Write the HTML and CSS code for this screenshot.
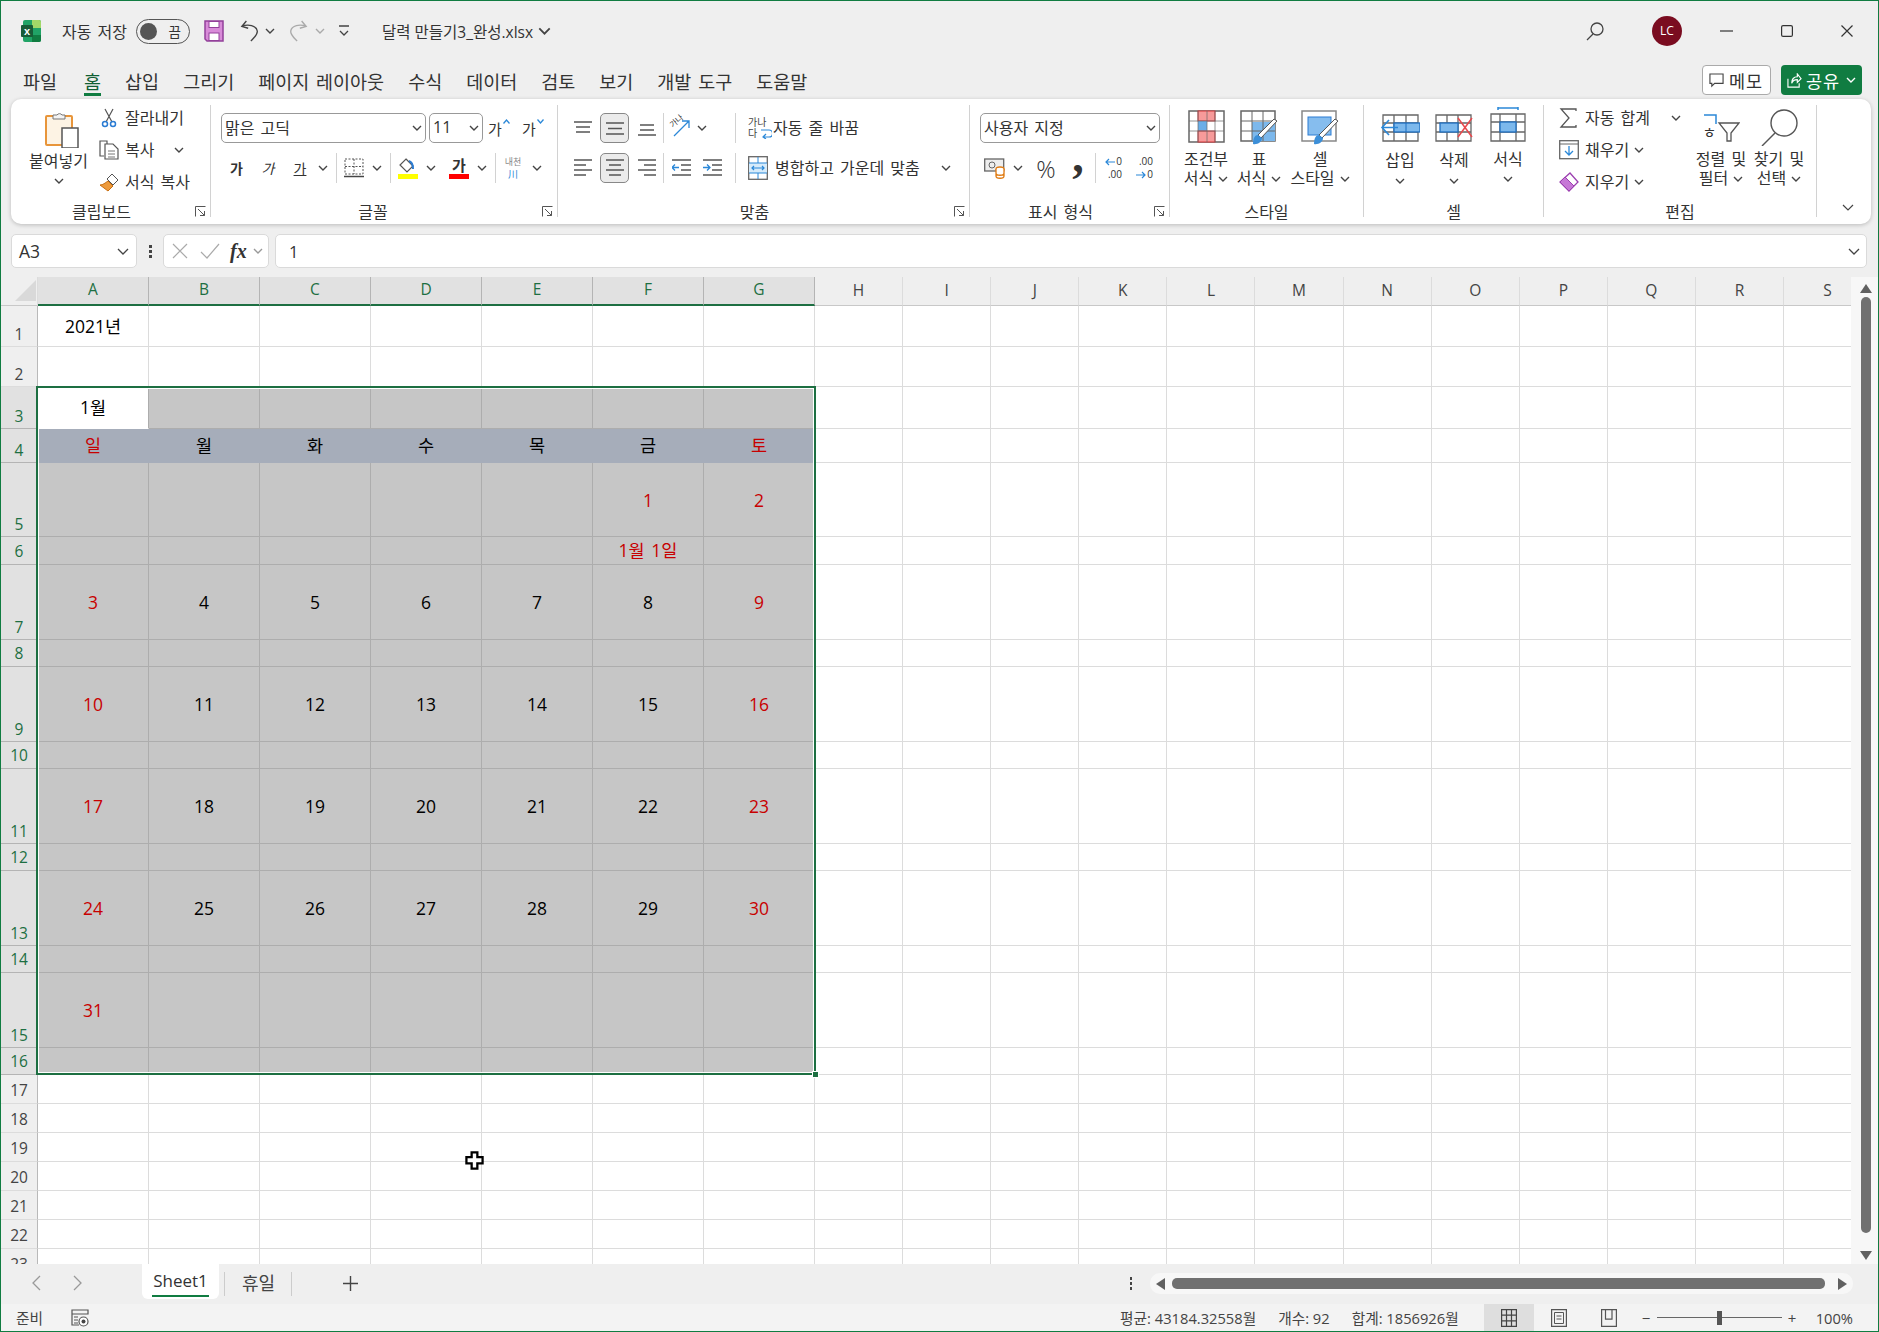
FILE: index.html
```html
<!DOCTYPE html>
<html lang="ko">
<head>
    <meta charset="UTF-8">
    <title>달력 만들기3_완성.xlsx - Excel</title>
    <link rel="stylesheet" href="styles.css">
</head>
<body>
<svg class="sprite" xmlns="http://www.w3.org/2000/svg">
    <symbol id="chev" viewBox="0 0 10 6"><path d="M1 1l4 4 4-4" fill="none" stroke="currentColor" stroke-width="1.4"/></symbol>
    <symbol id="launch" viewBox="0 0 11 11"><path d="M.5 10.5V.5h10M3 3l6.5 6.5M5 9.5h4.500V5" fill="none" stroke="#555" stroke-width="1"/></symbol>
</svg>

<div class="window">
    <!-- 제목 표시줄 -->
    <div class="titlebar">
        <svg class="logo" viewBox="0 0 20 22">
            <rect x="2" width="18" height="22" rx="2" fill="#21a366"/>
            <path d="M11 0h7a2 2 0 0 1 2 2v6h-9z" fill="#a3d868"/>
            <path d="M11 15h9v5a2 2 0 0 1-2 2h-7z" fill="#107c41"/>
            <rect y="5" width="12" height="12" rx="1" fill="#185c37"/>
            <text x="6" y="15" class="logo-x">x</text>
        </svg>
        <span class="autosave">자동 저장</span>
        <div class="toggle"><i></i><span>끔</span></div>
        <svg class="save" viewBox="0 0 20 22">
            <path d="M1 1h18v20H3l-2-2z" fill="#d88bd8" stroke="#93409a" stroke-width="1.500"/>
            <rect x="5" y="1.500" width="10" height="6" fill="#fff" stroke="#93409a"/>
            <rect x="5" y="13" width="10" height="7.500" fill="#fff" stroke="#93409a"/>
        </svg>
        <svg class="undo" viewBox="0 0 22 24"><path d="M7 1L2 7l7 2M2 7c7-3 16-1 17 5 .5 4-3 7-7 11" fill="none" stroke="#444" stroke-width="1.500"/></svg>
        <svg class="chev c16"><use href="#chev"/></svg>
        <svg class="redo" viewBox="0 0 22 24"><path d="M15 1l5 6-7 2M20 7C13 4 4 6 3 12c-.5 4 3 7 7 11" fill="none" stroke="#aaa" stroke-width="1.500"/></svg>
        <svg class="chev c20 dim"><use href="#chev"/></svg>
        <svg class="custom" viewBox="0 0 12 12"><path d="M1 1h10M2 6l4 4 4-4" fill="none" stroke="#444" stroke-width="1.300"/></svg>
        <span class="filename">달력 만들기3_완성.xlsx</span>
        <svg class="chev c-file"><use href="#chev"/></svg>
        <div class="win-controls">
            <svg class="search" viewBox="0 0 18 19"><circle cx="11" cy="7" r="6" fill="none" stroke="#444" stroke-width="1.300"/><path d="M7 12L1 18" stroke="#444" stroke-width="1.300"/></svg>
            <div class="avatar">LC</div>
            <svg class="min" viewBox="0 0 13 2"><path d="M0 1h13" stroke="#333" stroke-width="1.200"/></svg>
            <svg class="max" viewBox="0 0 12 12"><rect x=".6" y=".6" width="10.800" height="10.800" rx="1.500" fill="none" stroke="#333" stroke-width="1.200"/></svg>
            <svg class="close" viewBox="0 0 12 12"><path d="M.5.5l11 11M11.500.5l-11 11" stroke="#333" stroke-width="1.200"/></svg>
        </div>
    </div>

    <!-- 메뉴 -->
    <div class="menubar">
        <span class="tab">파일</span>
        <span class="tab on">홈</span>
        <span class="tab">삽입</span>
        <span class="tab">그리기</span>
        <span class="tab">페이지 레이아웃</span>
        <span class="tab">수식</span>
        <span class="tab">데이터</span>
        <span class="tab">검토</span>
        <span class="tab">보기</span>
        <span class="tab">개발 도구</span>
        <span class="tab">도움말</span>
        <div class="menu-right">
            <div class="memo"><svg viewBox="0 0 16 16"><path d="M1 1h14v10H6l-3 3v-3H1z" fill="none" stroke="#444" stroke-width="1.200"/></svg>메모</div>
            <div class="share"><svg viewBox="0 0 16 16"><path d="M1 6v9h12v-4M5 11c0-5 3-7 6-7V1l4 5-4 4V7c-3 0-5 1-6 4z" fill="none" stroke="#fff" stroke-width="1.200"/></svg>공유<svg class="chev"><use href="#chev"/></svg></div>
        </div>
    </div>

    <!-- 리본 -->
    <div class="ribbon">
        <div class="grp g-clip">
            <div class="grp-body">
                <div class="big paste">
                    <div class="ico">
                        <svg width="34" height="38" viewBox="0 0 34 38">
                            <rect x="1" y="6" width="26" height="29" rx="1" fill="#fdf3e4" stroke="#e8953a" stroke-width="2"/>
                            <path d="M8 9V5h4a3 3 0 0 1 5 0h3v4z" fill="#f4f4f4" stroke="#777"/>
                            <rect x="17" y="18" width="16" height="20" fill="#fff" stroke="#555" stroke-width="1.500"/>
                        </svg>
                    </div>
                    <div class="lb">붙여넣기</div>
                    <div class="lb"><svg class="chev"><use href="#chev"/></svg></div>
                </div>
                <div class="smalls">
                    <div class="small">
                        <svg class="sm-ico" viewBox="0 0 20 20"><path d="M6 1l7 13M14 1L7 14" stroke="#555" fill="none" stroke-width="1.200"/><circle cx="6" cy="16" r="2.500" fill="none" stroke="#2b7cd3" stroke-width="1.500"/><circle cx="14" cy="16" r="2.500" fill="none" stroke="#2b7cd3" stroke-width="1.500"/></svg>
                        <span>잘라내기</span>
                    </div>
                    <div class="small">
                        <svg class="sm-ico" viewBox="0 0 20 20"><path d="M5 16H1V1h7v3" fill="none" stroke="#555" stroke-width="1.200"/><path d="M6 4h8l5 5v10H6z" fill="#fff" stroke="#555" stroke-width="1.200"/><path d="M9 11h7M9 14h7M9 17h7" stroke="#777"/></svg>
                        <span>복사</span>
                        <svg class="chev c-copy"><use href="#chev"/></svg>
                    </div>
                    <div class="small">
                        <svg class="sm-ico" viewBox="0 0 20 20"><path d="M9 9l5 5-5 5L1 13c3 0 5-2 8-4z" fill="#ed9a3c" stroke="#c96f10"/><path d="M8 7l5-5 6 6-5 5z" fill="#fff" stroke="#555"/></svg>
                        <span>서식 복사</span>
                    </div>
                </div>
            </div>
            <div class="grp-foot"><span>클립보드</span><svg class="launch"><use href="#launch"/></svg></div>
        </div>

        <div class="grp g-font">
            <div class="grp-body rows">
                <div class="row">
                    <div class="combo c-name"><span>맑은 고딕</span><svg class="chev"><use href="#chev"/></svg></div>
                    <div class="combo c-size"><span>11</span><svg class="chev"><use href="#chev"/></svg></div>
                    <div class="grow ml5">가<svg viewBox="0 0 7 5"><path d="M.5 4.500L3.500 1l3 3.500" fill="none" stroke="#2b88d8" stroke-width="1.300"/></svg></div>
                    <div class="grow ml14">가<svg viewBox="0 0 7 5"><path d="M.5.500L3.500 4l3-3.500" fill="none" stroke="#2b88d8" stroke-width="1.300"/></svg></div>
                </div>
                <div class="row">
                    <div class="tb w31"><b>가</b></div>
                    <div class="tb w32"><i>가</i></div>
                    <div class="tb w32"><u>가</u></div>
                    <svg class="chev sm"><use href="#chev"/></svg>
                    <div class="vs ml6"></div>
                    <div class="tb w21 ml6">
                        <svg width="20" height="20" viewBox="0 0 20 20"><path d="M1 1h18v15H1zM10 1v15M1 8.500h18" fill="none" stroke="#555" stroke-dasharray="2 1.500"/><path d="M0 18.500h20" stroke="#444" stroke-width="1.500"/></svg>
                    </div>
                    <svg class="chev"><use href="#chev"/></svg>
                    <div class="vs"></div>
                    <div class="tb w20 ml7 col">
                        <svg width="20" height="17" viewBox="0 0 20 17"><path d="M8 2l7 7-6 6-7-7z" fill="#fff" stroke="#555" stroke-width="1.200"/><path d="M11 4c3 1 4 4 4 8" fill="none" stroke="#2b7cd3" stroke-width="2"/></svg>
                        <i class="bar yellow"></i>
                    </div>
                    <svg class="chev"><use href="#chev"/></svg>
                    <div class="tb w20 ml5 col"><b class="fc">가</b><i class="bar red"></i></div>
                    <svg class="chev"><use href="#chev"/></svg>
                    <div class="vs"></div>
                    <div class="tb w20 ml7 col phon"><span>내천</span><em>川</em></div>
                    <svg class="chev w28"><use href="#chev"/></svg>
                </div>
            </div>
            <div class="grp-foot"><span>글꼴</span><svg class="launch"><use href="#launch"/></svg></div>
        </div>

        <div class="grp g-align">
            <div class="grp-body rows">
                <div class="row">
                    <div class="al"><svg width="18" height="15" viewBox="0 0 18 15"><path d="M0 1h18M2 6h14M2 11h14" stroke="#555" stroke-width="1.300"/></svg></div>
                    <div class="al ml3 pressed"><svg width="18" height="15" viewBox="0 0 18 15"><path d="M0 2h18M2 7.500h14M0 13h18" stroke="#555" stroke-width="1.300"/></svg></div>
                    <div class="al ml3"><svg width="18" height="15" viewBox="0 0 18 15"><path d="M2 4h14M2 9h14M0 14h18" stroke="#555" stroke-width="1.300"/></svg></div>
                    <div class="vs ml2"></div>
                    <div class="tb w21 ml6 orient"><span>가나</span><svg width="21" height="20" viewBox="0 0 21 20"><path d="M4 18L19 3M12 3h7v7" fill="none" stroke="#2b88d8" stroke-width="1.300"/></svg></div>
                    <svg class="chev w22"><use href="#chev"/></svg>
                    <div class="vs ml22"></div>
                    <div class="tb w20 ml12 wrapic"><span>가나<br>다</span><svg width="12" height="12" viewBox="0 0 12 12"><path d="M1 3h8a2 2 0 0 1 0 7H4M6 7l-3 3 3 2" fill="none" stroke="#2b88d8" stroke-width="1.200"/></svg></div>
                    <span class="ml5 rt">자동 줄 바꿈</span>
                </div>
                <div class="row">
                    <div class="al"><svg width="18" height="18" viewBox="0 0 18 18"><path d="M0 1h18M0 6h12M0 11h18M0 16h12" stroke="#555" stroke-width="1.300"/></svg></div>
                    <div class="al ml3 pressed"><svg width="18" height="18" viewBox="0 0 18 18"><path d="M0 1h18M3 6h12M0 11h18M3 16h12" stroke="#555" stroke-width="1.300"/></svg></div>
                    <div class="al ml3"><svg width="18" height="18" viewBox="0 0 18 18"><path d="M0 1h18M6 6h12M0 11h18M6 16h12" stroke="#555" stroke-width="1.300"/></svg></div>
                    <div class="vs ml2"></div>
                    <div class="tb w19 ml8"><svg width="19" height="18" viewBox="0 0 19 18"><path d="M0 1h19M9 6h10M9 11h10M0 16h19" stroke="#555" stroke-width="1.300"/><path d="M7 8.500H0M3 5.500l-3 3 3 3" fill="none" stroke="#2b88d8" stroke-width="1.300"/></svg></div>
                    <div class="tb w19 ml12"><svg width="19" height="18" viewBox="0 0 19 18"><path d="M0 1h19M9 6h10M9 11h10M0 16h19" stroke="#555" stroke-width="1.300"/><path d="M0 8.500h7M4 5.500l3 3-3 3" fill="none" stroke="#2b88d8" stroke-width="1.300"/></svg></div>
                    <div class="vs ml13"></div>
                    <div class="tb w20 ml12"><svg width="20" height="24" viewBox="0 0 20 24"><rect x=".7" y=".7" width="18.600" height="22.600" fill="#fff" stroke="#666" stroke-width="1.300"/><rect x="1" y="7" width="18" height="10" fill="#d6ebfa"/><path d="M1 7h18M1 17h18M10 1v6M10 17v6" stroke="#2b88d8"/><path d="M4 12h12M6 10l-2 2 2 2M14 10l2 2-2 2" fill="none" stroke="#2b88d8" stroke-width="1.200"/></svg></div>
                    <span class="ml7 rt">병합하고 가운데 맞춤</span>
                    <svg class="chev c-merge"><use href="#chev"/></svg>
                </div>
            </div>
            <div class="grp-foot"><span>맞춤</span><svg class="launch"><use href="#launch"/></svg></div>
        </div>

        <div class="grp g-num">
            <div class="grp-body rows">
                <div class="row">
                    <div class="combo c-fmt"><span>사용자 지정</span><svg class="chev"><use href="#chev"/></svg></div>
                </div>
                <div class="row">
                    <div class="tb w21 ml4"><svg width="21" height="22" viewBox="0 0 21 22"><rect x=".7" y="2" width="19" height="12" fill="#eee" stroke="#666" stroke-width="1.300"/><circle cx="8" cy="8" r="3" fill="none" stroke="#666"/><ellipse cx="16" cy="12" rx="4" ry="2" fill="#fff" stroke="#e07a10" stroke-width="1.300"/><path d="M12 12v7c0 3 8 3 8 0v-7M12 16c0 3 8 3 8 0" fill="#fff" stroke="#e07a10" stroke-width="1.300"/></svg></div>
                    <svg class="chev"><use href="#chev"/></svg>
                    <div class="tb w30 pct">%</div>
                    <div class="tb w30 ml2 comma">,</div>
                    <div class="vs ml2"></div>
                    <div class="tb w19 ml7 dec">
                        <div class="dl"><svg width="10" height="8" viewBox="0 0 10 8"><path d="M10 4H1M4 1L1 4l3 3" fill="none" stroke="#2b88d8" stroke-width="1.200"/></svg>0</div>
                        <div class="dl">.00</div>
                    </div>
                    <div class="tb w19 ml12 dec">
                        <div class="dl">.00</div>
                        <div class="dl"><svg width="10" height="8" viewBox="0 0 10 8"><path d="M0 4h9M6 1l3 3-3 3" fill="none" stroke="#2b88d8" stroke-width="1.200"/></svg>0</div>
                    </div>
                </div>
            </div>
            <div class="grp-foot"><span>표시 형식</span><svg class="launch"><use href="#launch"/></svg></div>
        </div>

        <div class="grp g-style">
            <div class="grp-body">
                <div class="big w52">
                    <div class="ico">
                        <svg width="37" height="35" viewBox="0 0 37 35">
                            <path d="M1 1h35v31H1z" fill="#fff" stroke="#666" stroke-width="1.500"/>
                            <rect x="10" y="1" width="17" height="10" fill="#f79a9a" stroke="#d13438"/>
                            <rect x="10" y="11" width="9" height="10" fill="#6aaee8"/>
                            <rect x="10" y="21" width="17" height="11" fill="#f79a9a" stroke="#d13438"/>
                            <path d="M1 11h35M1 21h35M10 1v31M19 1v31M27 1v31" stroke="#666" fill="none" opacity=".7"/>
                        </svg>
                    </div>
                    <div class="lb">조건부</div>
                    <div class="lb">서식<svg class="chev in"><use href="#chev"/></svg></div>
                </div>
                <div class="big w54">
                    <div class="ico">
                        <svg width="38" height="36" viewBox="0 0 38 36">
                            <path d="M1 1h34v30H1z" fill="#fff" stroke="#666" stroke-width="1.500"/>
                            <rect x="12" y="12" width="23" height="19" fill="#7cb8ec"/>
                            <path d="M1 11h34M1 21h34M12 1v30M23 1v30" stroke="#666" fill="none"/>
                            <path d="M37 11L21 28l-3-3L34 9z" fill="#fff" stroke="#555"/>
                            <path d="M18 25c-3 0-5 3-5 9 4 1 9-2 9-6z" fill="#3c8fd8"/>
                        </svg>
                    </div>
                    <div class="lb">표</div>
                    <div class="lb">서식<svg class="chev in"><use href="#chev"/></svg></div>
                </div>
                <div class="big w58 ml5">
                    <div class="ico">
                        <svg width="38" height="36" viewBox="0 0 38 36">
                            <path d="M1 1h34v30H1z" fill="#fff" stroke="#888" stroke-width="1.500"/>
                            <rect x="7" y="7" width="23" height="18" fill="#86bdee" stroke="#2b7cd3"/>
                            <path d="M37 11L21 28l-3-3L34 9z" fill="#fff" stroke="#555"/>
                            <path d="M18 25c-3 0-5 3-5 9 4 1 9-2 9-6z" fill="#3c8fd8"/>
                        </svg>
                    </div>
                    <div class="lb">셀</div>
                    <div class="lb">스타일<svg class="chev in"><use href="#chev"/></svg></div>
                </div>
            </div>
            <div class="grp-foot nolaunch"><span>스타일</span></div>
        </div>

        <div class="grp g-cell">
            <div class="grp-body">
                <div class="big w54 low">
                    <div class="ico">
                        <svg width="40" height="28" viewBox="0 0 40 28">
                            <path d="M3 1h35v26H3zM3 9h35M3 18h35M14 1v26M26 1v26" fill="#fff" stroke="#666" stroke-width="1.300"/>
                            <rect x="14" y="9" width="26" height="9" fill="#7cb8ec" stroke="#1f6fc0" stroke-width="1.300"/>
                            <path d="M26 9v9" stroke="#1f6fc0"/>
                            <path d="M18 13.500H3M9 6l-7 7.500L9 21" fill="none" stroke="#2b88d8" stroke-width="1.600"/>
                        </svg>
                    </div>
                    <div class="lb">삽입</div>
                    <div class="lb"><svg class="chev"><use href="#chev"/></svg></div>
                </div>
                <div class="big w54 low">
                    <div class="ico">
                        <svg width="38" height="28" viewBox="0 0 38 28">
                            <path d="M1 1h35v26H1zM1 9h35M1 18h35M12 1v26M23 1v26" fill="#fff" stroke="#666" stroke-width="1.300"/>
                            <rect x="5" y="9" width="18" height="9" fill="#7cb8ec" stroke="#1f6fc0" stroke-width="1.300"/>
                            <path d="M23 4l14 19M37 4L23 23" stroke="#e8484c" stroke-width="1.500"/>
                        </svg>
                    </div>
                    <div class="lb">삭제</div>
                    <div class="lb"><svg class="chev"><use href="#chev"/></svg></div>
                </div>
                <div class="big w54 cellfmt">
                    <div class="ico">
                        <svg width="36" height="35" viewBox="0 0 36 35">
                            <path d="M8 1h20M8 0v3M28 0v3" stroke="#2b88d8" stroke-width="1.500"/>
                            <path d="M1 7h34v27H1zM1 15h34M1 25h34M10 7v27M26 7v27" fill="#fff" stroke="#666" stroke-width="1.300"/>
                            <rect x="10" y="15" width="16" height="10" fill="#7cb8ec" stroke="#1f6fc0" stroke-width="1.300"/>
                        </svg>
                    </div>
                    <div class="lb">서식</div>
                    <div class="lb"><svg class="chev"><use href="#chev"/></svg></div>
                </div>
            </div>
            <div class="grp-foot nolaunch"><span>셀</span></div>
        </div>

        <div class="grp g-edit">
            <div class="grp-body">
                <div class="smalls wide">
                    <div class="small">
                        <svg class="sm-ico" viewBox="0 0 20 20"><path d="M17 3V1H2l8 9-8 9h15v-2" fill="none" stroke="#555" stroke-width="1.300"/></svg>
                        <span>자동 합계</span>
                        <svg class="chev c-sum"><use href="#chev"/></svg>
                    </div>
                    <div class="small">
                        <svg class="sm-ico" viewBox="0 0 20 20"><rect x=".7" y=".7" width="18.600" height="18" fill="#fff" stroke="#666" stroke-width="1.300"/><path d="M1 4h18" stroke="#666"/><path d="M10 6v9M6 11l4 4 4-4" fill="none" stroke="#2b88d8" stroke-width="1.300"/></svg>
                        <span>채우기</span>
                        <svg class="chev sm2"><use href="#chev"/></svg>
                    </div>
                    <div class="small">
                        <svg class="sm-ico" viewBox="0 0 20 20"><path d="M11 1l8 9-9 9-9-9z" fill="#fff" stroke="#9c3fb0" stroke-width="1.300"/><path d="M1 10l5-5 9 9-5 5z" fill="#c678d6" stroke="#9c3fb0"/></svg>
                        <span>지우기</span>
                        <svg class="chev sm2"><use href="#chev"/></svg>
                    </div>
                </div>
                <div class="big w62">
                    <div class="ico">
                        <div class="sorticon">
                            <span>ㅎ</span>
                            <svg width="37" height="28" viewBox="0 0 37 28">
                                <path d="M1 1h12v9" fill="none" stroke="#2b88d8" stroke-width="1.500"/>
                                <path d="M16 9h20l-8 10v8h-4v-8z" fill="#fff" stroke="#555" stroke-width="1.300"/>
                            </svg>
                        </div>
                    </div>
                    <div class="lb">정렬 및</div>
                    <div class="lb">필터<svg class="chev in"><use href="#chev"/></svg></div>
                </div>
                <div class="big w54">
                    <div class="ico">
                        <svg width="37" height="37" viewBox="0 0 37 37"><circle cx="23" cy="14" r="13" fill="#fff" stroke="#555" stroke-width="1.400"/><path d="M14 24L1 37" stroke="#555" stroke-width="1.400"/></svg>
                    </div>
                    <div class="lb">찾기 및</div>
                    <div class="lb">선택<svg class="chev in"><use href="#chev"/></svg></div>
                </div>
            </div>
            <div class="grp-foot nolaunch"><span>편집</span></div>
        </div>

        <div class="collapse"><svg viewBox="0 0 12 7"><path d="M1 1l5 5 5-5" fill="none" stroke="#444" stroke-width="1.200"/></svg></div>
    </div>

    <!-- 수식 입력줄 -->
    <div class="formulabar">
        <div class="namebox"><span>A3</span><svg viewBox="0 0 12 7"><path d="M1 1l5 5 5-5" fill="none" stroke="#444" stroke-width="1.300"/></svg></div>
        <div class="dots"><i></i><i></i><i></i></div>
        <div class="fxbox">
            <svg viewBox="0 0 16 16"><path d="M1 1l14 14M15 1L1 15" stroke="#aaa" stroke-width="1.200"/></svg>
            <svg viewBox="0 0 20 16"><path d="M1 9l6 6L19 1" fill="none" stroke="#aaa" stroke-width="1.200"/></svg>
            <em>fx</em>
            <svg class="chev"><use href="#chev"/></svg>
        </div>
        <div class="finput"><span>1</span><svg viewBox="0 0 12 7"><path d="M1 1l5 5 5-5" fill="none" stroke="#444" stroke-width="1.300"/></svg></div>
    </div>

    <!-- 시트 -->
    <div class="sheet">
        <div class="gridwrap">
            <table class="grid">
                <colgroup>
                    <col class="c-hd"><col class="c-a"><col class="c-a"><col class="c-a"><col class="c-a"><col class="c-a"><col class="c-a"><col class="c-a">
                    <col class="c-b"><col class="c-b"><col class="c-b"><col class="c-b"><col class="c-b"><col class="c-b"><col class="c-b"><col class="c-b"><col class="c-b"><col class="c-b"><col class="c-b"><col class="c-b">
                </colgroup>
                <thead>
                    <tr>
                        <th class="corner"><svg viewBox="0 0 21 21"><path d="M21 0v21H0z" fill="#d9d9d9"/></svg></th>
                        <th class="pick">A</th><th class="pick">B</th><th class="pick">C</th><th class="pick">D</th><th class="pick">E</th><th class="pick">F</th><th class="pick">G</th>
                        <th>H</th><th>I</th><th>J</th><th>K</th><th>L</th><th>M</th><th>N</th><th>O</th><th>P</th><th>Q</th><th>R</th><th>S</th>
                    </tr>
                </thead>
                <tbody>
                    <tr class="h41"><th>1</th><td>2021년</td><td></td><td></td><td></td><td></td><td></td><td></td><td></td><td></td><td></td><td></td><td></td><td></td><td></td><td></td><td></td><td></td><td></td><td></td></tr>
                    <tr class="h40"><th>2</th><td></td><td></td><td></td><td></td><td></td><td></td><td></td><td></td><td></td><td></td><td></td><td></td><td></td><td></td><td></td><td></td><td></td><td></td><td></td></tr>
                    <tr class="h42 fill"><th>3</th><td class="active">1월</td><td></td><td></td><td></td><td></td><td></td><td></td><td></td><td></td><td></td><td></td><td></td><td></td><td></td><td></td><td></td><td></td><td></td><td></td></tr>
                    <tr class="h34 fill week"><th>4</th><td>일</td><td>월</td><td>화</td><td>수</td><td>목</td><td>금</td><td>토</td><td></td><td></td><td></td><td></td><td></td><td></td><td></td><td></td><td></td><td></td><td></td><td></td></tr>
                    <tr class="h74 fill"><th>5</th><td></td><td></td><td></td><td></td><td></td><td class="red">1</td><td>2</td><td></td><td></td><td></td><td></td><td></td><td></td><td></td><td></td><td></td><td></td><td></td><td></td></tr>
                    <tr class="h27 fill"><th>6</th><td></td><td></td><td></td><td></td><td></td><td class="red">1월 1일</td><td></td><td></td><td></td><td></td><td></td><td></td><td></td><td></td><td></td><td></td><td></td><td></td><td></td></tr>
                    <tr class="h75 fill"><th>7</th><td>3</td><td>4</td><td>5</td><td>6</td><td>7</td><td>8</td><td>9</td><td></td><td></td><td></td><td></td><td></td><td></td><td></td><td></td><td></td><td></td><td></td><td></td></tr>
                    <tr class="h27 fill"><th>8</th><td></td><td></td><td></td><td></td><td></td><td></td><td></td><td></td><td></td><td></td><td></td><td></td><td></td><td></td><td></td><td></td><td></td><td></td><td></td></tr>
                    <tr class="h75 fill"><th>9</th><td>10</td><td>11</td><td>12</td><td>13</td><td>14</td><td>15</td><td>16</td><td></td><td></td><td></td><td></td><td></td><td></td><td></td><td></td><td></td><td></td><td></td><td></td></tr>
                    <tr class="h27 fill"><th>10</th><td></td><td></td><td></td><td></td><td></td><td></td><td></td><td></td><td></td><td></td><td></td><td></td><td></td><td></td><td></td><td></td><td></td><td></td><td></td></tr>
                    <tr class="h75 fill"><th>11</th><td>17</td><td>18</td><td>19</td><td>20</td><td>21</td><td>22</td><td>23</td><td></td><td></td><td></td><td></td><td></td><td></td><td></td><td></td><td></td><td></td><td></td><td></td></tr>
                    <tr class="h27 fill"><th>12</th><td></td><td></td><td></td><td></td><td></td><td></td><td></td><td></td><td></td><td></td><td></td><td></td><td></td><td></td><td></td><td></td><td></td><td></td><td></td></tr>
                    <tr class="h75 fill"><th>13</th><td>24</td><td>25</td><td>26</td><td>27</td><td>28</td><td>29</td><td>30</td><td></td><td></td><td></td><td></td><td></td><td></td><td></td><td></td><td></td><td></td><td></td><td></td></tr>
                    <tr class="h27 fill"><th>14</th><td></td><td></td><td></td><td></td><td></td><td></td><td></td><td></td><td></td><td></td><td></td><td></td><td></td><td></td><td></td><td></td><td></td><td></td><td></td></tr>
                    <tr class="h75 fill"><th>15</th><td>31</td><td></td><td></td><td></td><td></td><td></td><td></td><td></td><td></td><td></td><td></td><td></td><td></td><td></td><td></td><td></td><td></td><td></td><td></td></tr>
                    <tr class="h27 fill"><th>16</th><td></td><td></td><td></td><td></td><td></td><td></td><td></td><td></td><td></td><td></td><td></td><td></td><td></td><td></td><td></td><td></td><td></td><td></td><td></td></tr>
                    <tr class="h29"><th>17</th><td></td><td></td><td></td><td></td><td></td><td></td><td></td><td></td><td></td><td></td><td></td><td></td><td></td><td></td><td></td><td></td><td></td><td></td><td></td></tr>
                    <tr class="h29"><th>18</th><td></td><td></td><td></td><td></td><td></td><td></td><td></td><td></td><td></td><td></td><td></td><td></td><td></td><td></td><td></td><td></td><td></td><td></td><td></td></tr>
                    <tr class="h29"><th>19</th><td></td><td></td><td></td><td></td><td></td><td></td><td></td><td></td><td></td><td></td><td></td><td></td><td></td><td></td><td></td><td></td><td></td><td></td><td></td></tr>
                    <tr class="h29"><th>20</th><td></td><td></td><td></td><td></td><td></td><td></td><td></td><td></td><td></td><td></td><td></td><td></td><td></td><td></td><td></td><td></td><td></td><td></td><td></td></tr>
                    <tr class="h29"><th>21</th><td></td><td></td><td></td><td></td><td></td><td></td><td></td><td></td><td></td><td></td><td></td><td></td><td></td><td></td><td></td><td></td><td></td><td></td><td></td></tr>
                    <tr class="h29"><th>22</th><td></td><td></td><td></td><td></td><td></td><td></td><td></td><td></td><td></td><td></td><td></td><td></td><td></td><td></td><td></td><td></td><td></td><td></td><td></td></tr>
                    <tr class="h29"><th>23</th><td></td><td></td><td></td><td></td><td></td><td></td><td></td><td></td><td></td><td></td><td></td><td></td><td></td><td></td><td></td><td></td><td></td><td></td><td></td></tr>
                </tbody>
            </table>
            <!-- 선택 영역과 마우스 커서는 표 위에 겹친다 -->
            <div class="selection"><i class="handle"></i></div>
            <svg class="cursor" viewBox="0 0 20 20"><path d="M7 1.500h6v5h5.500v6.500H13v5.500H7V13H1.500V6.500H7z" fill="#fff" stroke="#000" stroke-width="2.400"/></svg>
        </div>
        <div class="vscroll">
            <svg viewBox="0 0 12 9"><path d="M6 0l6 9H0z" fill="#606060"/></svg>
            <div class="vthumb"></div>
            <svg viewBox="0 0 12 9"><path d="M6 9l6-9H0z" fill="#606060"/></svg>
        </div>
    </div>

    <!-- 시트 탭 -->
    <div class="tabbar">
        <svg class="nav" viewBox="0 0 9 16"><path d="M8 1L1 8l7 7" fill="none" stroke="#999" stroke-width="1.300"/></svg>
        <svg class="nav next" viewBox="0 0 9 16"><path d="M1 1l7 7-7 7" fill="none" stroke="#999" stroke-width="1.300"/></svg>
        <div class="sheettab"><span>Sheet1</span></div>
        <div class="tabsep"></div>
        <span class="othertab">휴일</span>
        <div class="tabsep"></div>
        <svg class="plus" viewBox="0 0 15 15"><path d="M7.500 0v15M0 7.500h15" stroke="#444" stroke-width="1.400"/></svg>
        <div class="dots more"><i></i><i></i><i></i></div>
        <div class="hscroll">
            <svg viewBox="0 0 9 12"><path d="M0 6l9-6v12z" fill="#606060"/></svg>
            <div class="hthumb"></div>
            <svg viewBox="0 0 9 12"><path d="M9 6L0 0v12z" fill="#606060"/></svg>
        </div>
    </div>

    <!-- 상태 표시줄 -->
    <div class="statusbar">
        <span class="ready">준비</span>
        <svg class="macro" viewBox="0 0 18 18"><path d="M1 1h16v4H1zM1 5v11h7" fill="none" stroke="#555" stroke-width="1.200"/><path d="M3 8h4M3 11h4M3 14h4" stroke="#555"/><circle cx="12.500" cy="12.500" r="4.500" fill="#fff" stroke="#555" stroke-width="1.200"/><circle cx="12.500" cy="12.500" r="2" fill="#444"/></svg>
        <div class="stats">
            <span>평균: 43184.32558월</span>
            <span>개수: 92</span>
            <span>합계: 1856926월</span>
        </div>
        <div class="view on"><svg viewBox="0 0 16 18"><path d="M.6.6h14.800v16.800H.6zM5.500.6v16.800M10.500.6v16.800M.6 6.200h14.800M.6 11.800h14.800" fill="none" stroke="#444" stroke-width="1.200"/></svg></div>
        <div class="view"><svg viewBox="0 0 16 18"><path d="M.6.6h14.800v16.800H.6z" fill="none" stroke="#555" stroke-width="1.200"/><path d="M3.500 3.500h9v11h-9zM5.500 7h5M5.500 10h5" fill="none" stroke="#555"/></svg></div>
        <div class="view"><svg viewBox="0 0 16 18"><path d="M.6.600h14.800v16.800H.6zM4.500.600v9.500h6.500V.6" fill="none" stroke="#555" stroke-width="1.200"/></svg></div>
        <span class="zoombtn first">−</span>
        <div class="slider"><i></i></div>
        <span class="zoombtn">+</span>
        <span class="zoomval">100%</span>
    </div>
</div>
</body>
</html>
```

FILE: styles.css
```css
* {
    box-sizing: border-box;
}
html, body {
    margin: 0;
    height: 100%;
}
body {
    width: 1879px;
    height: 1332px;
    overflow: hidden;
    background: #efefef;
    color: #333;
    font-family: "Open Sans", "Noto Sans CJK KR", sans-serif;
    font-size: 16px;
    word-spacing: 2px;
}
.sprite {
    display: none;
}
.window {
    height: 1332px;
    border: 1px solid #107c41;
    display: flex;
    flex-direction: column;
}
.ml2 { margin-left: 2px; }
.ml3 { margin-left: 3px; }
.ml4 { margin-left: 4px; }
.ml5 { margin-left: 5px; }
.ml6 { margin-left: 6px; }
.ml7 { margin-left: 7px; }
.ml8 { margin-left: 8px; }
.ml12 { margin-left: 12px; }
.ml13 { margin-left: 13px; }
.ml14 { margin-left: 14px; }
.ml22 { margin-left: 22px; }

.chev {
    display: block;
    flex: none;
    width: 26px;
    height: 6px;
    color: #444;
}
.chev.sm { width: 14px; }
.chev.w22 { width: 22px; }
.chev.w28 { width: 28px; }
.chev.dim { color: #aaa; }

/* 제목 표시줄 */
.titlebar {
    height: 60px;
    flex: none;
    display: flex;
    align-items: center;
    padding-left: 20px;
}
.logo {
    width: 20px;
    height: 22px;
    flex: none;
}
.logo-x {
    font: bold 11px "Liberation Sans", sans-serif;
    fill: #fff;
    text-anchor: middle;
}
.autosave {
    width: 74px;
    margin-left: 21px;
    white-space: nowrap;
}
.toggle {
    width: 54px;
    height: 25px;
    border: 1.5px solid #555;
    border-radius: 13px;
    display: flex;
    align-items: center;
    justify-content: space-between;
    padding: 0 8px 0 3px;
    font-size: 13.5px;
}
.toggle i {
    width: 17px;
    height: 17px;
    border-radius: 50%;
    background: #555;
}
.save {
    width: 20px;
    height: 22px;
    margin-left: 14px;
}
.undo {
    width: 20px;
    height: 24px;
    margin-left: 16px;
}
.chev.c16 {
    width: 16px;
    margin-left: 2px;
}
.redo {
    width: 20px;
    height: 24px;
    margin-left: 10px;
}
.chev.c20 {
    width: 20px;
    margin-left: 2px;
}
.custom {
    width: 12px;
    height: 12px;
    margin-left: 8px;
}
.filename {
    margin-left: 32px;
    white-space: nowrap;
    font-size: 15.5px;
    word-spacing: 0;
}
.chev.c-file {
    width: 13px;
    height: 8px;
    margin-left: 5px;
}
.win-controls {
    margin-left: auto;
    padding-right: 25px;
    display: flex;
    align-items: center;
}
.search {
    width: 18px;
    height: 19px;
}
.avatar {
    width: 30px;
    height: 30px;
    margin-left: 48px;
    border-radius: 50%;
    background: #7a0c20;
    color: #fff;
    font-size: 12px;
    text-align: center;
    line-height: 30px;
}
.min {
    width: 13px;
    height: 2px;
    margin-left: 38px;
}
.max {
    width: 12px;
    height: 12px;
    margin-left: 48px;
}
.close {
    width: 12px;
    height: 12px;
    margin-left: 48px;
}

/* 메뉴 */
.menubar {
    height: 38px;
    flex: none;
    display: flex;
    padding-left: 22px;
    gap: 24px;
    font-size: 18.5px;
}
.tab {
    height: 35px;
    line-height: 42px;
    white-space: nowrap;
}
.tab.on {
    margin-left: 3px;
    border-bottom: 3px solid #107c41;
    color: #105e33;
}
.menu-right {
    margin-left: auto;
    padding: 4px 16px 0 0;
    display: flex;
    gap: 10px;
    font-size: 17.5px;
    letter-spacing: 1px;
}
.memo, .share {
    height: 30px;
    border-radius: 4px;
    display: flex;
    align-items: center;
}
.memo {
    width: 69px;
    padding-left: 6px;
    background: #fff;
    border: 1px solid #aaa;
    gap: 5px;
}
.memo svg, .share svg:first-child {
    width: 15px;
    height: 15px;
    flex: none;
}
.share {
    width: 81px;
    padding-left: 6px;
    background: #107c41;
    color: #fff;
    gap: 4px;
}
.share .chev {
    width: 10px;
    color: #fff;
    margin-left: 2px;
}

/* 리본 */
.ribbon {
    height: 125px;
    flex: none;
    margin: 0 7px 0 10px;
    background: #fff;
    border-radius: 10px;
    box-shadow: 0 1px 4px rgba(0, 0, 0, .22);
    display: flex;
}
.grp {
    flex: none;
    height: 112px;
    margin-top: 6px;
    border-right: 1px solid #d2d2d2;
    display: flex;
    flex-direction: column;
}
.g-clip { width: 200px; }
.g-font { width: 347px; }
.g-align { width: 412px; }
.g-num { width: 200px; }
.g-style { width: 194px; }
.g-cell { width: 180px; }
.g-edit { width: 273px; }
.grp-body {
    height: 92px;
    display: flex;
}
.grp-foot {
    height: 20px;
    display: flex;
    line-height: 30px;
}
.grp-foot span {
    flex: 1;
    text-align: center;
    white-space: nowrap;
}
.g-font .grp-foot span { padding-right: 4px; }
.launch {
    width: 11px;
    height: 11px;
    margin: 9px 4px 0 3px;
}
.rows {
    flex-direction: column;
    padding: 8px 0 0 10px;
    gap: 10px;
}
.row {
    height: 30px;
    display: flex;
    align-items: center;
    white-space: nowrap;
}
.rt {
    margin-top: -2px;
}
.g-clip .grp-body { padding-left: 9px; }
.g-style .grp-body { padding-left: 10px; }
.g-cell .grp-body { padding-left: 9px; }
.g-edit .grp-body { padding-left: 15px; }

.big {
    flex: none;
    display: flex;
    flex-direction: column;
    align-items: center;
}
.paste { width: 77px; }
.paste .ico {
    height: 47px;
    padding-left: 7px;
}
.w52 { width: 52px; }
.w54 { width: 54px; }
.w58 { width: 58px; }
.w62 { width: 62px; }
.ico {
    height: 45px;
    display: flex;
    align-items: center;
    justify-content: center;
}
.lb {
    height: 19px;
    line-height: 19px;
    white-space: nowrap;
    display: flex;
    align-items: center;
    justify-content: center;
}
.chev.in {
    width: 10px;
    margin-left: 5px;
}
.big > .lb > .chev:only-child { width: 10px; }
.cellfmt .ico { padding-bottom: 6px; }
.low .ico { height: 46px; }
.low .lb + .lb { height: 21px; }

.smalls {
    margin-left: 2px;
    display: flex;
    flex-direction: column;
    gap: 6px;
}
.smalls.wide {
    width: 131px;
    margin-left: 0;
}
.small {
    height: 26px;
    display: flex;
    align-items: center;
    white-space: nowrap;
}
.small span {
    margin-top: -2px;
}
.sm-ico {
    width: 20px;
    height: 20px;
    flex: none;
    margin-right: 6px;
}
.chev.c-copy {
    width: 10px;
    margin-left: 20px;
}
.chev.c-sum {
    width: 10px;
    margin-left: 21px;
}
.chev.sm2 {
    width: 10px;
    margin-left: 5px;
}

.combo {
    height: 30px;
    background: #fff;
    border: 1px solid #999;
    border-radius: 5px;
    display: flex;
    align-items: center;
    justify-content: space-between;
    padding: 0 3px;
}
.combo span {
    margin-top: -2px;
}
.combo .chev { width: 10px; }
.c-name { width: 205px; }
.c-size {
    width: 54px;
    margin-left: 3px;
}
.c-fmt { width: 180px; }
.grow {
    width: 20px;
    font-size: 15px;
    display: flex;
    align-items: flex-start;
}
.grow svg {
    width: 7px;
    height: 5px;
    margin: 1px 0 0 1px;
    flex: none;
}
.tb {
    flex: none;
    height: 30px;
    display: flex;
    align-items: center;
    justify-content: center;
}
.tb.col {
    flex-direction: column;
}
.tb b, .tb u, .tb i {
    font-size: 14px;
}
.w19 { width: 19px; }
.w20 { width: 20px; }
.w21 { width: 21px; }
.w30 { width: 30px; }
.w31 { width: 31px; }
.w32 { width: 32px; }
.vs {
    flex: none;
    width: 1px;
    height: 30px;
    background: #d2d2d2;
}
.bar {
    display: block;
    width: 20px;
    height: 5px;
    flex: none;
}
.bar.yellow { background: #ffff00; }
.bar.red { background: #ff0000; }
.tb b.fc {
    font-size: 15px;
    line-height: 17px;
}
.phon {
    font-size: 9px;
    line-height: 13px;
    color: #888;
}
.phon em {
    font-style: normal;
    color: #2b88d8;
    font-size: 10px;
}
.al {
    flex: none;
    width: 29px;
    height: 30px;
    border: 1px solid transparent;
    border-radius: 5px;
    display: flex;
    align-items: center;
    justify-content: center;
}
.al.pressed {
    background: #ebebeb;
    border-color: #888;
}
.orient {
    position: relative;
}
.orient span {
    position: absolute;
    left: -1px;
    top: 3px;
    font-size: 8px;
    line-height: 10px;
    transform: rotate(-40deg);
}
.wrapic {
    font-size: 10px;
    line-height: 11px;
    justify-content: flex-start;
    color: #444;
    white-space: nowrap;
}
.wrapic span {
    margin-right: -6px;
}
.wrapic svg {
    margin-top: 10px;
    flex: none;
}
.chev.c-merge {
    width: 10px;
    margin-left: 21px;
}
.pct {
    font-size: 24px;
    font-weight: 300;
}
.comma {
    font: bold 46px "Liberation Serif", serif;
    padding-bottom: 24px;
}
.dec {
    flex-direction: column;
    align-items: flex-end;
    font-size: 10px;
    line-height: 13px;
}
.dl {
    display: flex;
    align-items: center;
    gap: 1px;
    height: 13px;
}
.sorticon {
    position: relative;
    width: 37px;
    height: 28px;
}
.sorticon span {
    position: absolute;
    left: 0;
    top: 8px;
    font-size: 15px;
    line-height: 20px;
    color: #333;
}
.sorticon svg {
    position: absolute;
    left: 0;
    top: 0;
}
.collapse {
    flex: 1;
    display: flex;
    justify-content: flex-end;
    padding: 105px 17px 0 0;
}
.collapse svg {
    width: 12px;
    height: 7px;
}

/* 수식 입력줄 */
.formulabar {
    height: 34px;
    flex: none;
    margin: 10px 11px 9px 10px;
    display: flex;
}
.namebox, .fxbox, .finput {
    background: #fff;
    border: 1px solid #dadada;
    border-radius: 5px;
    display: flex;
    align-items: center;
}
.namebox {
    width: 126px;
    padding: 0 7px;
    justify-content: space-between;
    font-size: 17.5px;
}
.namebox svg, .finput svg {
    width: 12px;
    height: 7px;
}
.dots {
    width: 26px;
    display: flex;
    flex-direction: column;
    align-items: center;
    justify-content: center;
    gap: 2px;
}
.dots i {
    width: 3px;
    height: 3px;
    background: #444;
}
.fxbox {
    width: 106px;
    padding-left: 8px;
}
.fxbox svg {
    width: 16px;
    height: 16px;
    flex: none;
}
.fxbox svg + svg {
    width: 20px;
    margin-left: 12px;
}
.fxbox em {
    font: italic bold 20px "Liberation Serif", serif;
    margin-left: 10px;
    color: #333;
}
.fxbox .chev {
    width: 12px;
    height: 6px;
    margin-left: 5px;
    color: #999;
}
.finput {
    flex: 1;
    margin-left: 6px;
    padding: 0 6px 0 13px;
    justify-content: space-between;
    font-size: 16.5px;
}

/* 시트 */
.sheet {
    height: 987px;
    flex: none;
    display: flex;
}
.gridwrap {
    width: 1850px;
    position: relative;
    overflow: hidden;
    background: #fff;
}
.grid {
    width: 1871px;
    table-layout: fixed;
    border-collapse: separate;
    border-spacing: 0;
    font-size: 17.5px;
    color: #000;
}
.c-hd { width: 37px; }
.c-a { width: 111px; }
.c-b { width: 88.1px; }
.grid th {
    padding: 0;
    font-weight: 400;
    font-size: 15.5px;
    color: #444;
    background: #efefef;
}
.grid thead th {
    height: 29px;
    padding-bottom: 3px;
    border-right: 1px solid #dcdcdc;
    border-bottom: 1px solid #c8c8c8;
}
.grid thead th.pick {
    background: #e1e1e1;
    color: #1d6f42;
    border-right-color: #b4b4b4;
    border-bottom: 2px solid #1d6f42;
}
.corner svg {
    display: block;
    width: 21px;
    height: 21px;
    margin: 2px 0 0 14px;
}
.grid tbody th {
    vertical-align: bottom;
    line-height: 24px;
    border-right: 1px solid #b9b9b9;
    border-bottom: 1px solid #dcdcdc;
}
.grid td {
    padding: 0;
    text-align: center;
    border-right: 1px solid #dcdcdc;
    border-bottom: 1px solid #dcdcdc;
}
.grid tr.h27 td, .grid tr.h34 td, .grid tr.h41 td, .grid tr.h42 td {
    padding-bottom: 2px;
}
.h27 { height: 27px; }
.h29 { height: 29px; }
.h34 { height: 34px; }
.h40 { height: 40px; }
.h41 { height: 41px; }
.h42 { height: 42px; }
.h74 { height: 74px; }
.h75 { height: 75px; }
.grid tr.h27 th, .grid tr.h29 th {
    line-height: 26px;
}
.fill th {
    background: #e1e1e1 !important;
    color: #1d6f42 !important;
    border-bottom-color: #b4b4b4 !important;
}
.fill td:nth-child(-n+8) {
    background: #c6c6c6;
    border-right-color: #adadad;
    border-bottom-color: #adadad;
}
.fill td:nth-child(2), .fill td:nth-child(8), .grid td.red {
    color: #c80000;
}
.grid td.active {
    background: #fff;
    color: #000;
    border-bottom-color: #fff;
}
.week td:nth-child(-n+8) {
    background: #a6adba;
    border-color: #a6adba;
}
.selection {
    position: absolute;
    left: 35px;
    top: 109px;
    width: 780px;
    height: 689px;
    border: 2px solid #1d6f42;
    box-shadow: inset 0 0 0 1px #fff;
}
.handle {
    position: absolute;
    right: -5px;
    bottom: -5px;
    width: 7px;
    height: 7px;
    background: #1d6f42;
    border: 1px solid #fff;
}
.cursor {
    position: absolute;
    left: 464px;
    top: 874px;
    width: 19px;
    height: 19px;
}
.vscroll {
    flex: 1;
    background: #f7f7f7;
    display: flex;
    flex-direction: column;
    align-items: center;
    padding: 7px 0 4px 2px;
}
.vscroll svg {
    width: 12px;
    height: 9px;
    flex: none;
}
.vthumb {
    width: 10px;
    flex: 1;
    margin: 4px 0 18px;
    background: #707070;
    border-radius: 5px;
}

/* 시트 탭 */
.tabbar {
    height: 40px;
    flex: none;
    display: flex;
    align-items: flex-start;
    padding-left: 31px;
}
.nav {
    width: 9px;
    height: 16px;
    margin-top: 11px;
}
.nav.next {
    margin-left: 32px;
}
.sheettab {
    width: 77px;
    height: 35px;
    margin-left: 60px;
    background: #fff;
    border-radius: 0 0 6px 6px;
    text-align: center;
    font-size: 17px;
}
.sheettab span {
    display: inline-block;
    width: 57px;
    height: 33px;
    line-height: 34px;
    border-bottom: 2px solid #107c41;
}
.tabsep {
    width: 1px;
    height: 24px;
    margin: 8px 0 0 5px;
    background: #ccc;
}
.othertab {
    margin: 3px 0 0 17px;
    width: 44px;
    line-height: 32px;
    font-size: 18px;
    color: #444;
}
.plus {
    width: 15px;
    height: 15px;
    margin: 12px 0 0 51px;
}
.dots.more {
    margin: 11px 0 0 771px;
    width: 4px;
    height: 17px;
}
.dots.more i {
    width: 2.5px;
}
.hscroll {
    width: 703px;
    height: 21px;
    margin: 9px 0 0 17px;
    background: #f7f7f7;
    border-radius: 10px;
    display: flex;
    align-items: center;
    padding: 0 6px;
}
.hscroll svg {
    width: 9px;
    height: 12px;
    flex: none;
}
.hthumb {
    height: 11px;
    flex: 1;
    margin: 0 13px 0 7px;
    background: #707070;
    border-radius: 5px;
}

/* 상태 표시줄 */
.statusbar {
    height: 27px;
    flex: none;
    background: #f3f3f3;
    display: flex;
    align-items: center;
    padding: 0 25px 0 15px;
    font-size: 14.7px;
    word-spacing: 0;
    color: #444;
}
.macro {
    width: 18px;
    height: 18px;
    margin-left: 28px;
}
.stats {
    margin-left: auto;
    display: flex;
    gap: 22px;
    margin-right: 25px;
    white-space: nowrap;
}
.view {
    width: 50px;
    height: 27px;
    display: flex;
    align-items: center;
    justify-content: center;
}
.view.on {
    background: #dedede;
}
.view svg {
    width: 16px;
    height: 18px;
}
.zoombtn {
    width: 11px;
    margin-left: 5px;
    text-align: center;
    font-size: 15px;
    line-height: 20px;
}
.zoombtn.first {
    margin-left: 7px;
}
.slider {
    width: 125px;
    height: 1px;
    margin-left: 5px;
    background: #666;
    display: flex;
    align-items: center;
    justify-content: center;
}
.slider i {
    width: 5px;
    height: 14px;
    flex: none;
    background: #555;
}
.zoomval {
    margin-left: 18px;
    white-space: nowrap;
}
```
